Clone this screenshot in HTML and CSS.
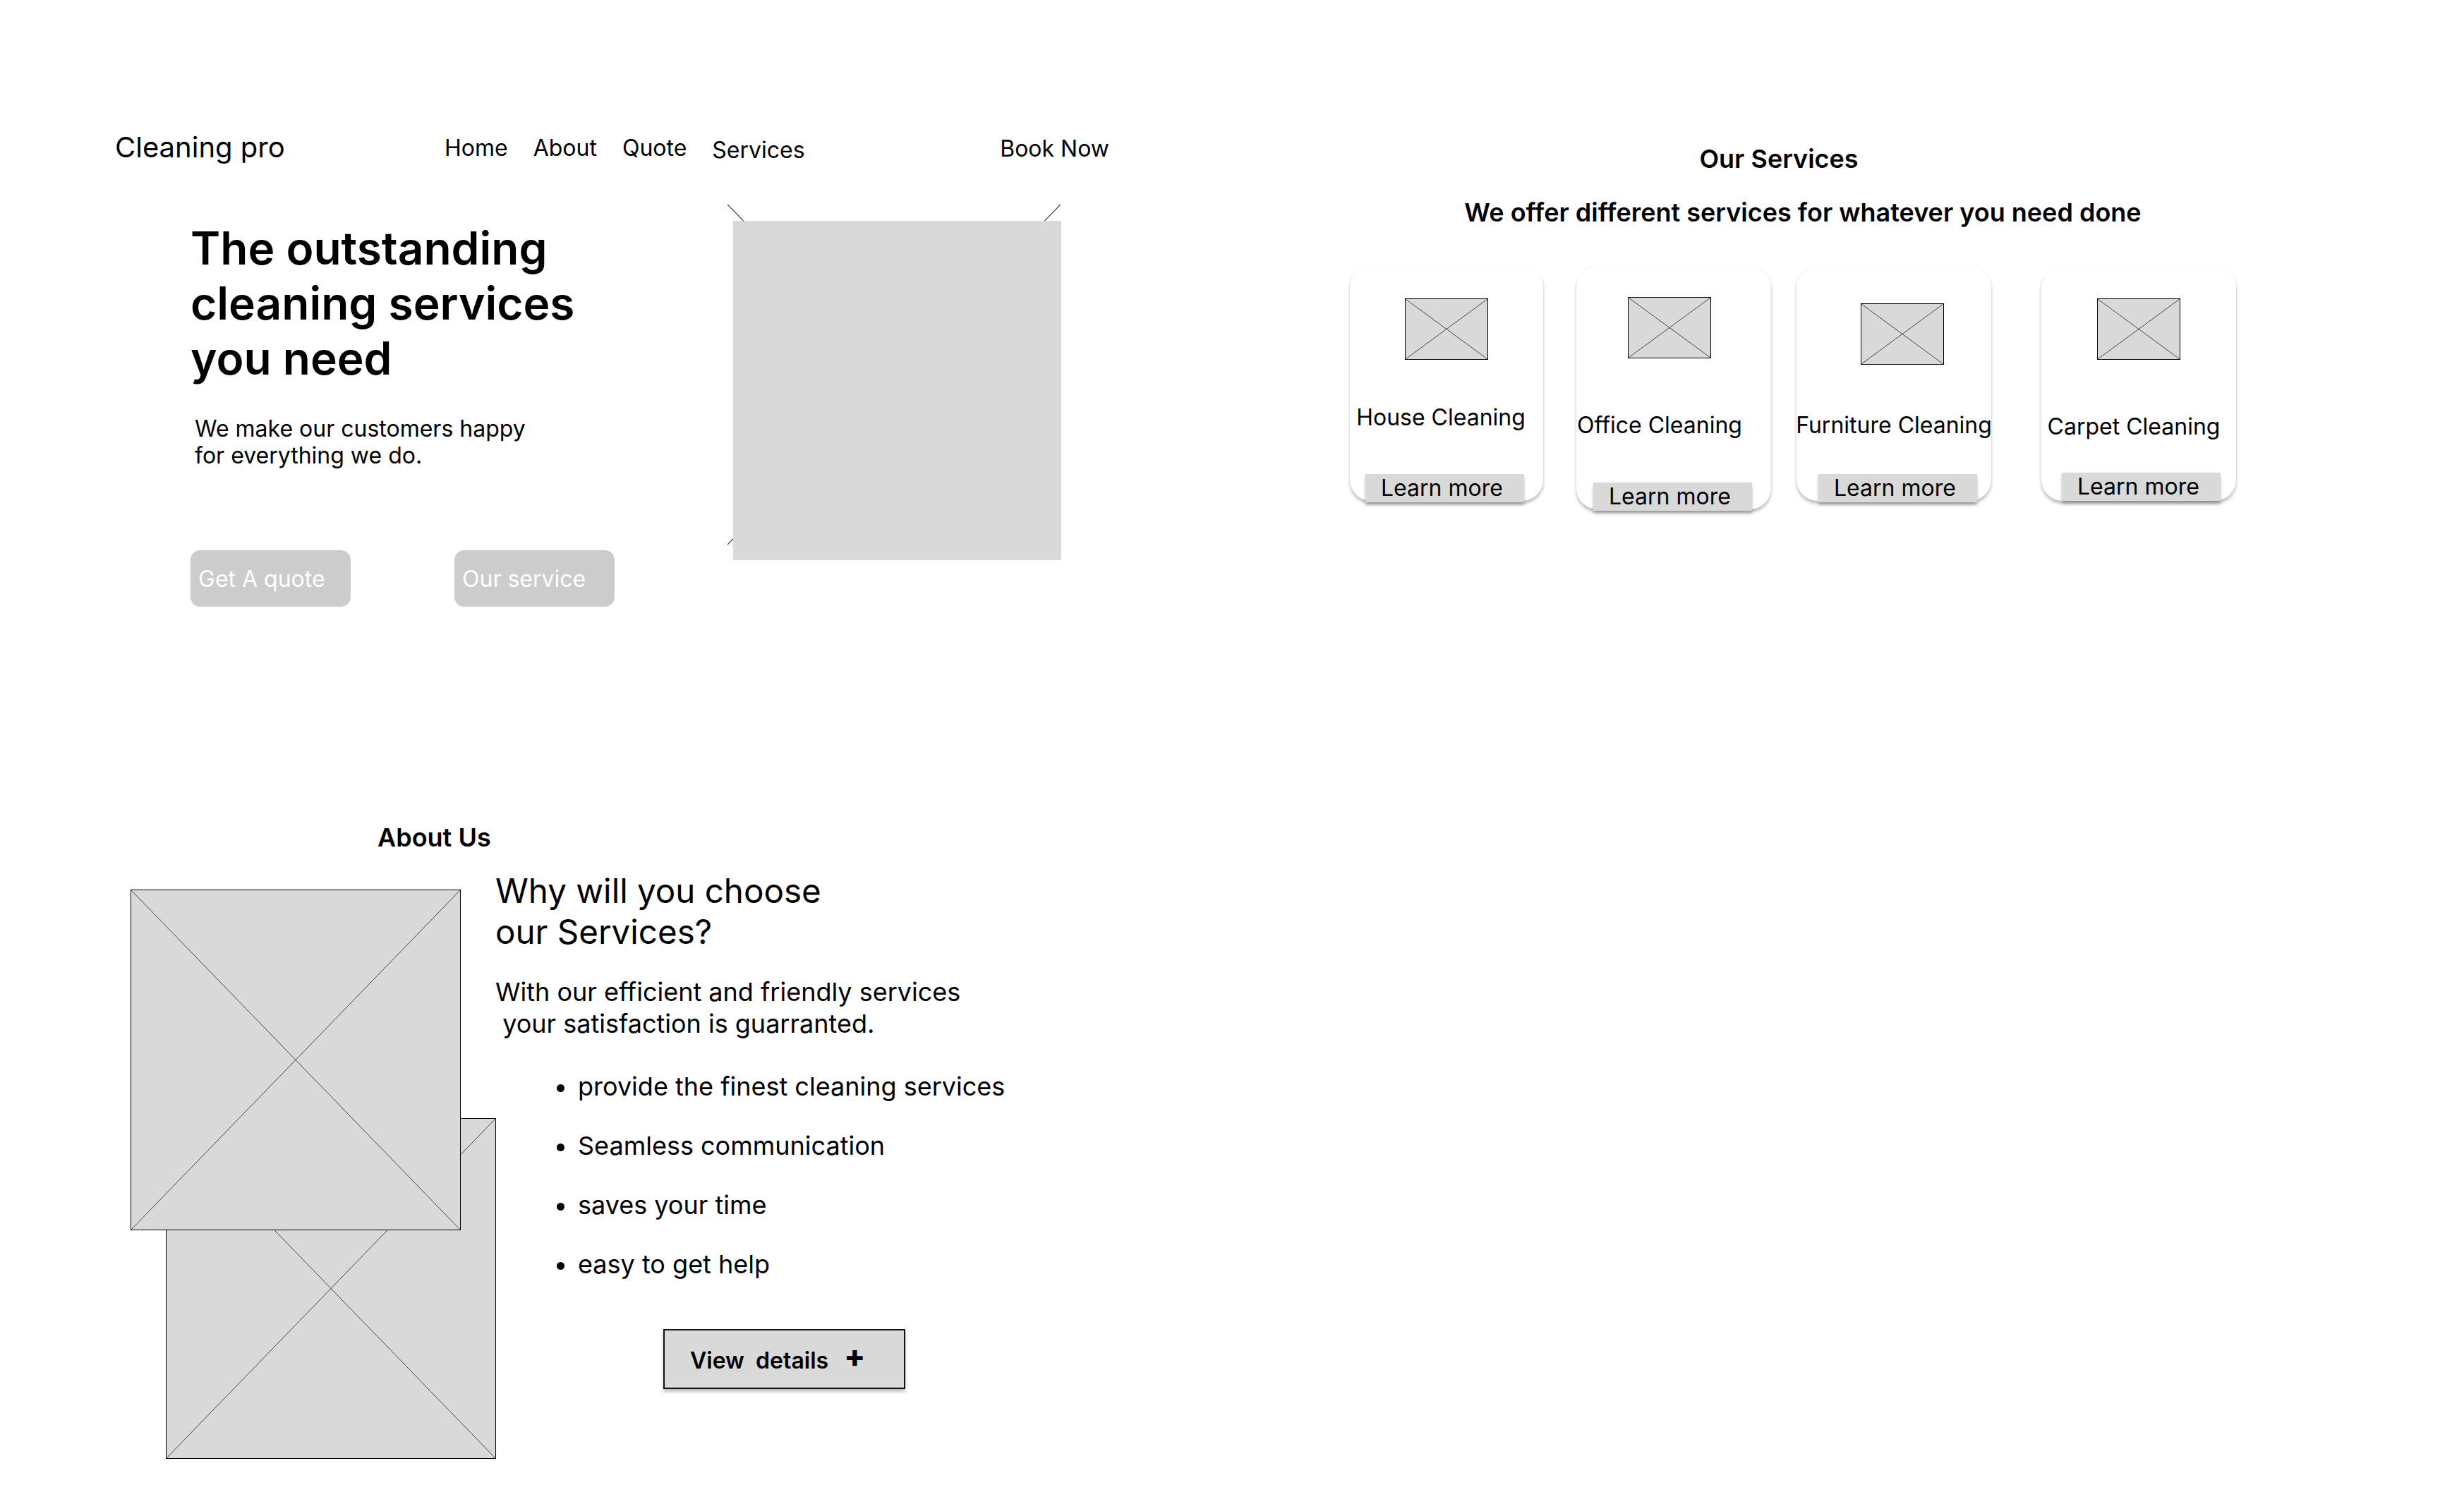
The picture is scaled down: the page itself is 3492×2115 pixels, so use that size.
FILE: index.html
```html
<!DOCTYPE html>
<html lang="en">
<head>
<meta charset="utf-8">
<title>Cleaning pro</title>
<link rel="stylesheet" href="styles.css">
</head>
<body>
<div class="page">
  <div class="col-left">
    <header class="topbar">
      <div class="logo">Cleaning pro</div>
      <nav class="nav">
        <a class="nav-link">Home</a>
        <a class="nav-link">About</a>
        <a class="nav-link">Quote</a>
        <a class="nav-link nav-link--low">Services</a>
      </nav>
      <a class="book">Book Now</a>
    </header>

    <section class="hero">
      <div class="hero-text">
        <h1 class="hero-title">The outstanding<br>cleaning services<br>you need</h1>
        <p class="hero-sub">We make our customers happy<br>for everything we do.</p>
        <div class="hero-actions">
          <button class="pill">Get A quote</button>
          <button class="pill">Our service</button>
        </div>
      </div>
      <div class="hero-media">
        <svg class="hero-lines" viewBox="0 0 100 100" preserveAspectRatio="none">
          <line x1="0" y1="0" x2="100" y2="100" vector-effect="non-scaling-stroke"/>
          <line x1="100" y1="0" x2="0" y2="100" vector-effect="non-scaling-stroke"/>
        </svg>
        <div class="hero-rect"></div>
      </div>
    </section>

    <section class="about">
      <h2 class="about-title">About Us</h2>
      <div class="about-body">
        <div class="about-images">
          <div class="ph ph--back">
            <svg class="ph-x" viewBox="0 0 100 100" preserveAspectRatio="none">
              <line x1="0" y1="0" x2="100" y2="100" vector-effect="non-scaling-stroke"/>
              <line x1="100" y1="0" x2="0" y2="100" vector-effect="non-scaling-stroke"/>
            </svg>
          </div>
          <div class="ph ph--front">
            <svg class="ph-x" viewBox="0 0 100 100" preserveAspectRatio="none">
              <line x1="0" y1="0" x2="100" y2="100" vector-effect="non-scaling-stroke"/>
              <line x1="100" y1="0" x2="0" y2="100" vector-effect="non-scaling-stroke"/>
            </svg>
          </div>
        </div>
        <div class="about-text">
          <h3 class="about-heading">Why will you choose<br>our Services?</h3>
          <p class="about-para">With our efficient and friendly services<br>&nbsp;your satisfaction is guarranted.</p>
          <ul class="about-list">
            <li class="about-item">provide the finest cleaning services</li>
            <li class="about-item">Seamless communication</li>
            <li class="about-item">saves your time</li>
            <li class="about-item">easy to get help</li>
          </ul>
          <button class="details-btn">View  details  <span class="details-plus">+</span></button>
        </div>
      </div>
    </section>
  </div>

  <section class="services">
    <h2 class="services-title">Our Services</h2>
    <p class="services-sub">We offer different services for whatever you need done</p>
    <div class="cards">
      <article class="card card--1">
        <div class="ph ph--small">
          <svg class="ph-x" viewBox="0 0 100 100" preserveAspectRatio="none">
            <line x1="0" y1="0" x2="100" y2="100" vector-effect="non-scaling-stroke"/>
            <line x1="100" y1="0" x2="0" y2="100" vector-effect="non-scaling-stroke"/>
          </svg>
        </div>
        <h4 class="card-title">House Cleaning</h4>
        <button class="learn">Learn more</button>
      </article>
      <article class="card card--2">
        <div class="ph ph--small">
          <svg class="ph-x" viewBox="0 0 100 100" preserveAspectRatio="none">
            <line x1="0" y1="0" x2="100" y2="100" vector-effect="non-scaling-stroke"/>
            <line x1="100" y1="0" x2="0" y2="100" vector-effect="non-scaling-stroke"/>
          </svg>
        </div>
        <h4 class="card-title">Office Cleaning</h4>
        <button class="learn">Learn more</button>
      </article>
      <article class="card card--3">
        <div class="ph ph--small">
          <svg class="ph-x" viewBox="0 0 100 100" preserveAspectRatio="none">
            <line x1="0" y1="0" x2="100" y2="100" vector-effect="non-scaling-stroke"/>
            <line x1="100" y1="0" x2="0" y2="100" vector-effect="non-scaling-stroke"/>
          </svg>
        </div>
        <h4 class="card-title">Furniture Cleaning</h4>
        <button class="learn">Learn more</button>
      </article>
      <article class="card card--4">
        <div class="ph ph--small">
          <svg class="ph-x" viewBox="0 0 100 100" preserveAspectRatio="none">
            <line x1="0" y1="0" x2="100" y2="100" vector-effect="non-scaling-stroke"/>
            <line x1="100" y1="0" x2="0" y2="100" vector-effect="non-scaling-stroke"/>
          </svg>
        </div>
        <h4 class="card-title">Carpet Cleaning</h4>
        <button class="learn">Learn more</button>
      </article>
    </div>
  </section>
</div>
</body>
</html>
```

FILE: styles.css
```css
* { box-sizing: border-box; }

html, body {
  margin: 0;
  padding: 0;
  background: #ffffff;
}

body {
  font-family: Inter, "Noto Sans", sans-serif;
  color: #000000;
  width: 3492px;
  height: 2115px;
  overflow: hidden;
}

h1, h2, h3, h4, p, ul { margin: 0; padding: 0; }

button {
  font-family: inherit;
  border: none;
  padding: 0;
  cursor: pointer;
}

.page {
  display: grid;
  grid-template-columns: 1800px 1fr;
}

/* ---------- header ---------- */
.topbar {
  display: flex;
  align-items: center;
  margin-top: 185px;
  padding-left: 163px;
  width: 1572px;
  height: 48px;
}

.logo {
  font-size: 40px;
  line-height: 48px;
  width: 467px;
  flex: none;
}

.nav {
  display: flex;
  gap: 36px;
  padding-top: 4px;
}

.nav-link {
  font-size: 32px;
  line-height: 48px;
  color: #000;
  text-decoration: none;
}

.nav-link--low { margin-top: 3px; }

.book {
  margin-left: auto;
  padding-top: 4px;
  font-size: 32px;
  line-height: 48px;
  color: #000;
}

/* ---------- hero ---------- */
.hero {
  display: flex;
  margin-top: 57px;
  padding-left: 270px;
}

.hero-text {
  width: 761px;
  padding-top: 23px;
}

.hero-title {
  font-size: 64px;
  line-height: 78px;
  font-weight: 600;
}

.hero-sub {
  margin-top: 42px;
  margin-left: 6px;
  font-size: 32px;
  line-height: 38px;
}

.hero-actions {
  display: flex;
  gap: 147px;
  margin-top: 115px;
}

.pill {
  width: 227px;
  height: 80px;
  border-radius: 14px;
  background: #cccccc;
  color: #ffffff;
  font-size: 32px;
  text-align: left;
  padding-left: 11px;
}

.hero-media {
  position: relative;
  width: 472px;
  height: 482px;
}

.hero-lines {
  display: block;
  width: 100%;
  height: 100%;
  stroke: #333;
  stroke-width: 1.2;
}

.hero-rect {
  position: absolute;
  left: 8px;
  top: 23px;
  width: 465px;
  height: 481px;
  background: #d9d9d9;
}

/* ---------- placeholders ---------- */
.ph {
  background: #d9d9d9;
  border: 1px solid #000;
}

.ph-x {
  display: block;
  width: 100%;
  height: 100%;
  stroke: #222;
  stroke-width: 0.8;
}

/* ---------- about ---------- */
.about {
  margin-top: 305px;
}

.about-title {
  padding-left: 535px;
  font-size: 36px;
  line-height: 44px;
  font-weight: 600;
}

.about-body {
  display: flex;
  align-items: flex-start;
  margin-top: 25px;
  padding-left: 185px;
}

.about-images {
  display: grid;
  width: 517px;
  flex: none;
  margin-top: 27px;
}

.ph--front,
.ph--back {
  grid-area: 1 / 1;
  width: 468px;
  height: 483px;
}

.ph--back {
  margin-left: 50px;
  margin-top: 324px;
}

.ph--front {
  position: relative;
  z-index: 1;
}

.about-text {
  display: flex;
  flex-direction: column;
  align-items: flex-start;
}

.about-heading {
  font-size: 47.5px;
  line-height: 58px;
  font-weight: 400;
}

.about-para {
  margin-top: 34px;
  font-size: 36px;
  line-height: 45px;
}

.about-list {
  list-style: none;
  margin-top: 44px;
  padding-left: 117px;
  display: flex;
  flex-direction: column;
  gap: 39px;
}

.about-item {
  position: relative;
  font-size: 36px;
  line-height: 45px;
}

.about-item::before {
  content: "";
  position: absolute;
  left: -30px;
  top: 19px;
  width: 11px;
  height: 11px;
  border-radius: 50%;
  background: #000;
}

.details-btn {
  margin-top: 69px;
  margin-left: 238px;
  width: 343px;
  height: 85px;
  background: #d9d9d9;
  border: 2px solid #111;
  box-shadow: 0 4px 4px rgba(0, 0, 0, 0.25);
  font-size: 32px;
  font-weight: 600;
  white-space: pre;
  text-align: left;
  padding-left: 36px;
  color: #000;
}

.details-plus {
  display: inline-block;
  margin-left: 6px;
  font-size: 44px;
  font-weight: 800;
  line-height: 32px;
  vertical-align: 2px;
}

/* ---------- services ---------- */
.services {
  padding-left: 113px;
}

.services-title {
  margin-top: 203px;
  width: 1256px;
  text-align: center;
  padding-right: 40px;
  font-size: 36px;
  line-height: 44px;
  font-weight: 600;
}

.services-sub {
  margin-top: 32px;
  width: 1256px;
  text-align: center;
  padding-left: 28px;
  font-size: 36px;
  line-height: 44px;
  font-weight: 600;
}

.cards {
  display: flex;
  align-items: flex-start;
  margin-top: 54px;
}

.card {
  position: relative;
  display: flex;
  flex-direction: column;
  align-items: center;
  width: 276px;
  height: 333px;
  background: #fff;
  border-radius: 30px;
  box-shadow: 0 4px 4px rgba(0, 0, 0, 0.25), 0 0 1px rgba(0, 0, 0, 0.12);
}

.ph--small {
  width: 118px;
  height: 87px;
  border-width: 1.5px;
}

.card-title {
  font-size: 32px;
  line-height: 40px;
  font-weight: 400;
  white-space: nowrap;
}

.learn {
  position: absolute;
  bottom: -2px;
  width: 225px;
  height: 40px;
  background: #d9d9d9;
  box-shadow: 0 4px 4px rgba(0, 0, 0, 0.25);
  font-size: 32px;
  line-height: 40px;
  text-align: left;
  padding-left: 22px;
  color: #000;
}

.card--1 { width: 274px; }
.card--1 .ph--small { margin-top: 46px; }
.card--1 .card-title { margin-top: 62px; margin-right: 16px; }
.card--1 .learn { left: 22px; }

.card--2 { margin-left: 47px; height: 345px; }
.card--2 .ph--small { margin-top: 44px; margin-right: 12px; }
.card--2 .card-title { margin-top: 75px; margin-right: 40px; }
.card--2 .learn { left: 24px; }

.card--3 { margin-left: 36px; }
.card--3 .ph--small { margin-top: 53px; margin-left: 24px; }
.card--3 .card-title { margin-top: 66px; }
.card--3 .learn { left: 31px; }

.card--4 { margin-left: 71px; }
.card--4 .ph--small { margin-top: 46px; margin-left: 0; }
.card--4 .card-title { margin-top: 75px; margin-right: 14px; }
.card--4 .learn { left: 29px; bottom: 0; }
```
